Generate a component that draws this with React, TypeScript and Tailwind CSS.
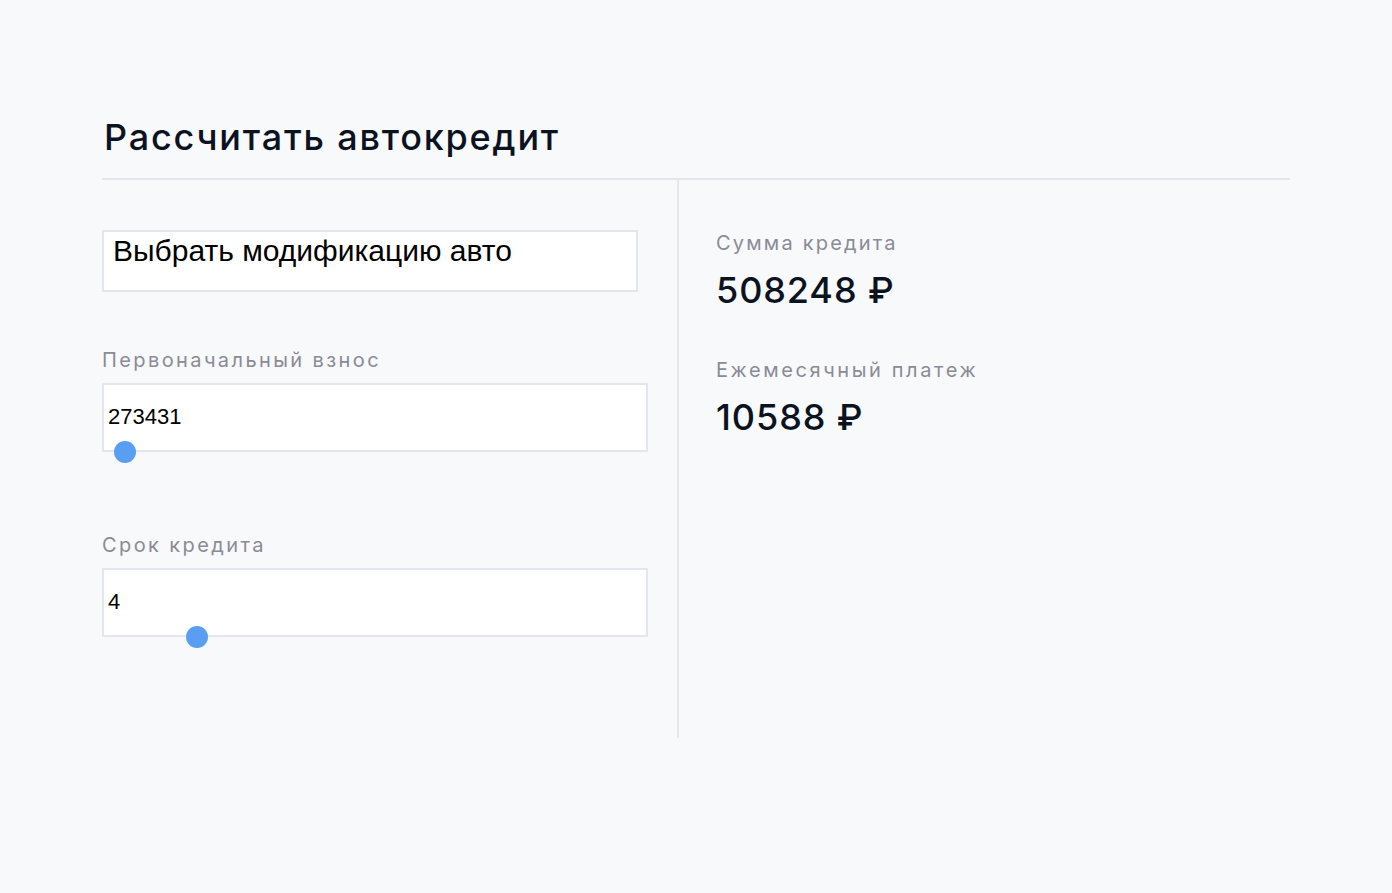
const HEAD = "font-['Inter','Noto_Sans',sans-serif]"
const ARIAL = "font-['Liberation_Sans',Arial,sans-serif]"

function RangeField({ label, value, thumbLeft }: { label: string; value: string; thumbLeft: number }) {
  return (
    <div>
      <div className={`${HEAD} text-[20px] leading-[24px] tracking-[0.12em] text-[#8a8b96]`}>{label}</div>
      <div className="relative mt-[11px] h-[69px] w-[546px] border-2 border-[#e4e6ee] bg-white">
        <div className={`${ARIAL} pl-[4px] pt-[19px] text-[22px] leading-[26px] text-black`}>{value}</div>
        <div
          className="absolute bottom-[-13px] h-[22px] w-[22px] rounded-full bg-[#5a9ef2]"
          style={{ left: thumbLeft }}
        />
      </div>
    </div>
  )
}

export default function App() {
  return (
    <div className="min-h-screen bg-[#f8f9fb] pt-[114px]">
      <div className="ml-[102px] w-[1188px]">
        <h1 className={`${HEAD} border-b-2 border-[#e4e6ee] pb-[18px] pl-[2px] text-[36px] font-medium leading-[46px] tracking-[0.05em] text-[#0b1322]`}>
          Рассчитать автокредит
        </h1>
        <div className="flex">
          <div className="h-[558px] w-[577px] border-r-2 border-[#e4e6ee] pt-[50px]">
            <div className="h-[62px] w-[536px] border-2 border-[#e4e6ee] bg-white">
              <div className={`${ARIAL} pl-[9px] pt-[1px] text-[30px] leading-[36px] text-black`}>
                Выбрать модификацию авто
              </div>
            </div>
            <div className="mt-[56px]">
              <RangeField label="Первоначальный взнос" value="273431" thumbLeft={10} />
            </div>
            <div className="mt-[81px]">
              <RangeField label="Срок кредита" value="4" thumbLeft={82} />
            </div>
          </div>
          <div className={`${HEAD} pl-[37px] pt-[51px]`}>
            <div className="text-[20px] leading-[24px] tracking-[0.11em] text-[#8a8b96]">Сумма кредита</div>
            <div className="mt-[13px] text-[36px] font-medium leading-[44px] tracking-[0.025em] text-[#0b1322]">508248 ₽</div>
            <div className="mt-[46px] text-[20px] leading-[24px] tracking-[0.13em] text-[#8a8b96]">Ежемесячный платеж</div>
            <div className="mt-[13px] text-[36px] font-medium leading-[44px] tracking-[0.025em] text-[#0b1322]">10588 ₽</div>
          </div>
        </div>
      </div>
    </div>
  )
}
